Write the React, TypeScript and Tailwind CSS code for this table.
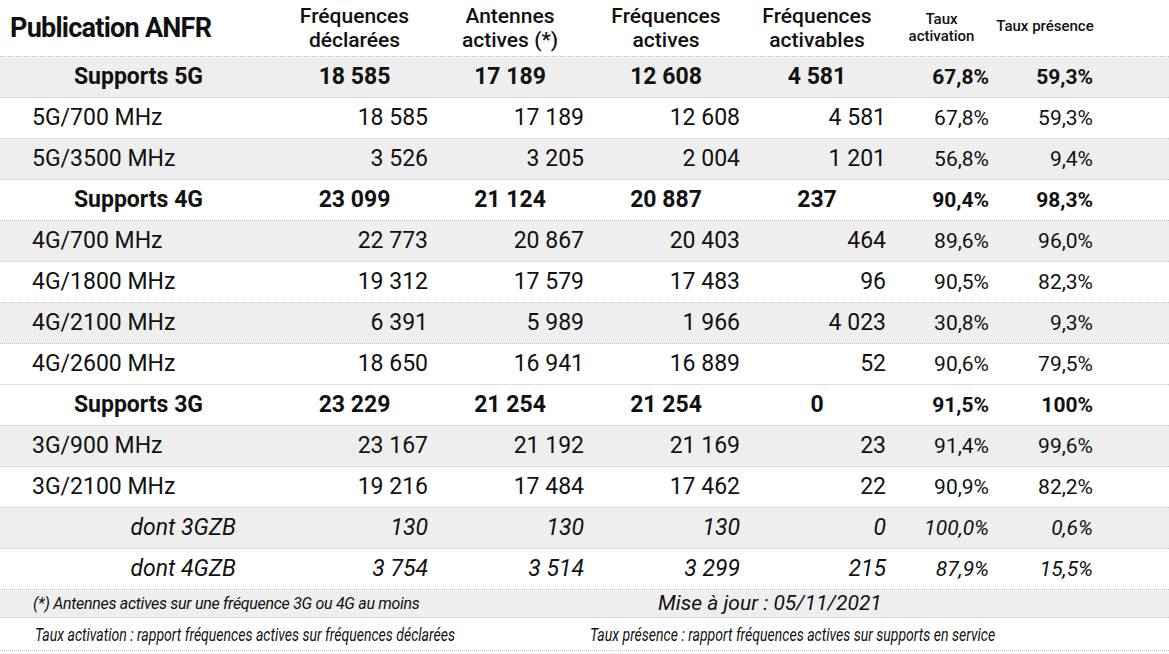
import React from "react";

type Row = {
  kind: "bold" | "normal" | "italic";
  label: string;
  v: string[];
  gray: boolean;
};

const rows: Row[] = [
  { kind: "bold", label: "Supports 5G", v: ["18 585", "17 189", "12 608", "4 581", "67,8%", "59,3%"], gray: true },
  { kind: "normal", label: "5G/700 MHz", v: ["18 585", "17 189", "12 608", "4 581", "67,8%", "59,3%"], gray: false },
  { kind: "normal", label: "5G/3500 MHz", v: ["3 526", "3 205", "2 004", "1 201", "56,8%", "9,4%"], gray: true },
  { kind: "bold", label: "Supports 4G", v: ["23 099", "21 124", "20 887", "237", "90,4%", "98,3%"], gray: false },
  { kind: "normal", label: "4G/700 MHz", v: ["22 773", "20 867", "20 403", "464", "89,6%", "96,0%"], gray: true },
  { kind: "normal", label: "4G/1800 MHz", v: ["19 312", "17 579", "17 483", "96", "90,5%", "82,3%"], gray: false },
  { kind: "normal", label: "4G/2100 MHz", v: ["6 391", "5 989", "1 966", "4 023", "30,8%", "9,3%"], gray: true },
  { kind: "normal", label: "4G/2600 MHz", v: ["18 650", "16 941", "16 889", "52", "90,6%", "79,5%"], gray: false },
  { kind: "bold", label: "Supports 3G", v: ["23 229", "21 254", "21 254", "0", "91,5%", "100%"], gray: false },
  { kind: "normal", label: "3G/900 MHz", v: ["23 167", "21 192", "21 169", "23", "91,4%", "99,6%"], gray: true },
  { kind: "normal", label: "3G/2100 MHz", v: ["19 216", "17 484", "17 462", "22", "90,9%", "82,2%"], gray: false },
  { kind: "italic", label: "dont 3GZB", v: ["130", "130", "130", "0", "100,0%", "0,6%"], gray: true },
  { kind: "italic", label: "dont 4GZB", v: ["3 754", "3 514", "3 299", "215", "87,9%", "15,5%"], gray: false },
];

const grid = "grid grid-cols-[277px_155px_156px_156px_146px_103px_104px_1fr]";

function DataRow({ r }: { r: Row }) {
  const bg = r.gray ? "bg-[#eeeeee]" : "bg-white";
  const bold = r.kind === "bold";
  const italic = r.kind === "italic";
  return (
    <div className={`${grid} ${bg} h-[41px] items-center pt-[1px] border-b border-dotted border-[#c8c8c8]`}>
      <div
        className={
          bold
            ? "text-center text-[23px] font-bold"
            : italic
            ? "text-right pr-[41px] text-[23px] italic"
            : "pl-[32px] text-[23px]"
        }
      >
        {r.label}
      </div>
      {r.v.slice(0, 4).map((x, i) => (
        <div
          key={i}
          className={
            bold
              ? "text-center text-[23px] font-bold"
              : `text-right pr-[4px] text-[23px] ${italic ? "italic" : ""}`
          }
        >
          {x}
        </div>
      ))}
      {r.v.slice(4).map((x, i) => (
        <div
          key={"p" + i}
          className={`text-right pr-[4px] text-[21px] ${bold ? "font-bold" : ""} ${italic ? "italic" : ""}`}
        >
          {x}
        </div>
      ))}
      <div />
    </div>
  );
}

export default function App() {
  return (
    <div
      className="w-[1169px] h-[654px] bg-white text-[#111111] overflow-hidden"
      style={{ fontFamily: "Roboto, 'Noto Sans', sans-serif" }}
    >
      <div className={`${grid} h-[57px] items-center border-b border-dotted border-[#c8c8c8]`}>
        <div className="pl-[10px] text-[27px] font-bold tracking-[-0.75px] leading-none">Publication ANFR</div>
        <div className="text-center text-[21px] font-medium leading-[24px]">
          Fréquences
          <br />
          déclarées
        </div>
        <div className="text-center text-[21px] font-medium leading-[24px]">
          Antennes
          <br />
          actives (*)
        </div>
        <div className="text-center text-[21px] font-medium leading-[24px]">
          Fréquences
          <br />
          actives
        </div>
        <div className="text-center text-[21px] font-medium leading-[24px]">
          Fréquences
          <br />
          activables
        </div>
        <div className="text-center text-[15px] font-medium leading-[17px]">
          Taux
          <br />
          activation
        </div>
        <div className="text-center text-[15px] font-medium leading-[17px] -mt-[4px]">Taux présence</div>
        <div />
      </div>
      {rows.map((r, i) => (
        <DataRow key={i} r={r} />
      ))}
      <div className="flex h-[28px] items-center bg-[#eeeeee] border-b border-dotted border-[#c8c8c8]">
        <div className="w-[658px] pl-[33px] text-[16px] italic tracking-[-0.3px]">
          (*) Antennes actives sur une fréquence 3G ou 4G au moins
        </div>
        <div className="text-[21px] italic">Mise à jour : 05/11/2021</div>
      </div>
      <div className="flex h-[33px] items-center border-b border-dotted border-[#c8c8c8]">
        <div className="w-[590px] pl-[35px]">
          <div className="text-[18px] italic origin-left scale-x-[0.78] whitespace-nowrap">
            Taux activation : rapport fréquences actives sur fréquences déclarées
          </div>
        </div>
        <div>
          <div className="text-[18px] italic origin-left scale-x-[0.78] whitespace-nowrap">
            Taux présence : rapport fréquences actives sur supports en service
          </div>
        </div>
      </div>
    </div>
  );
}
